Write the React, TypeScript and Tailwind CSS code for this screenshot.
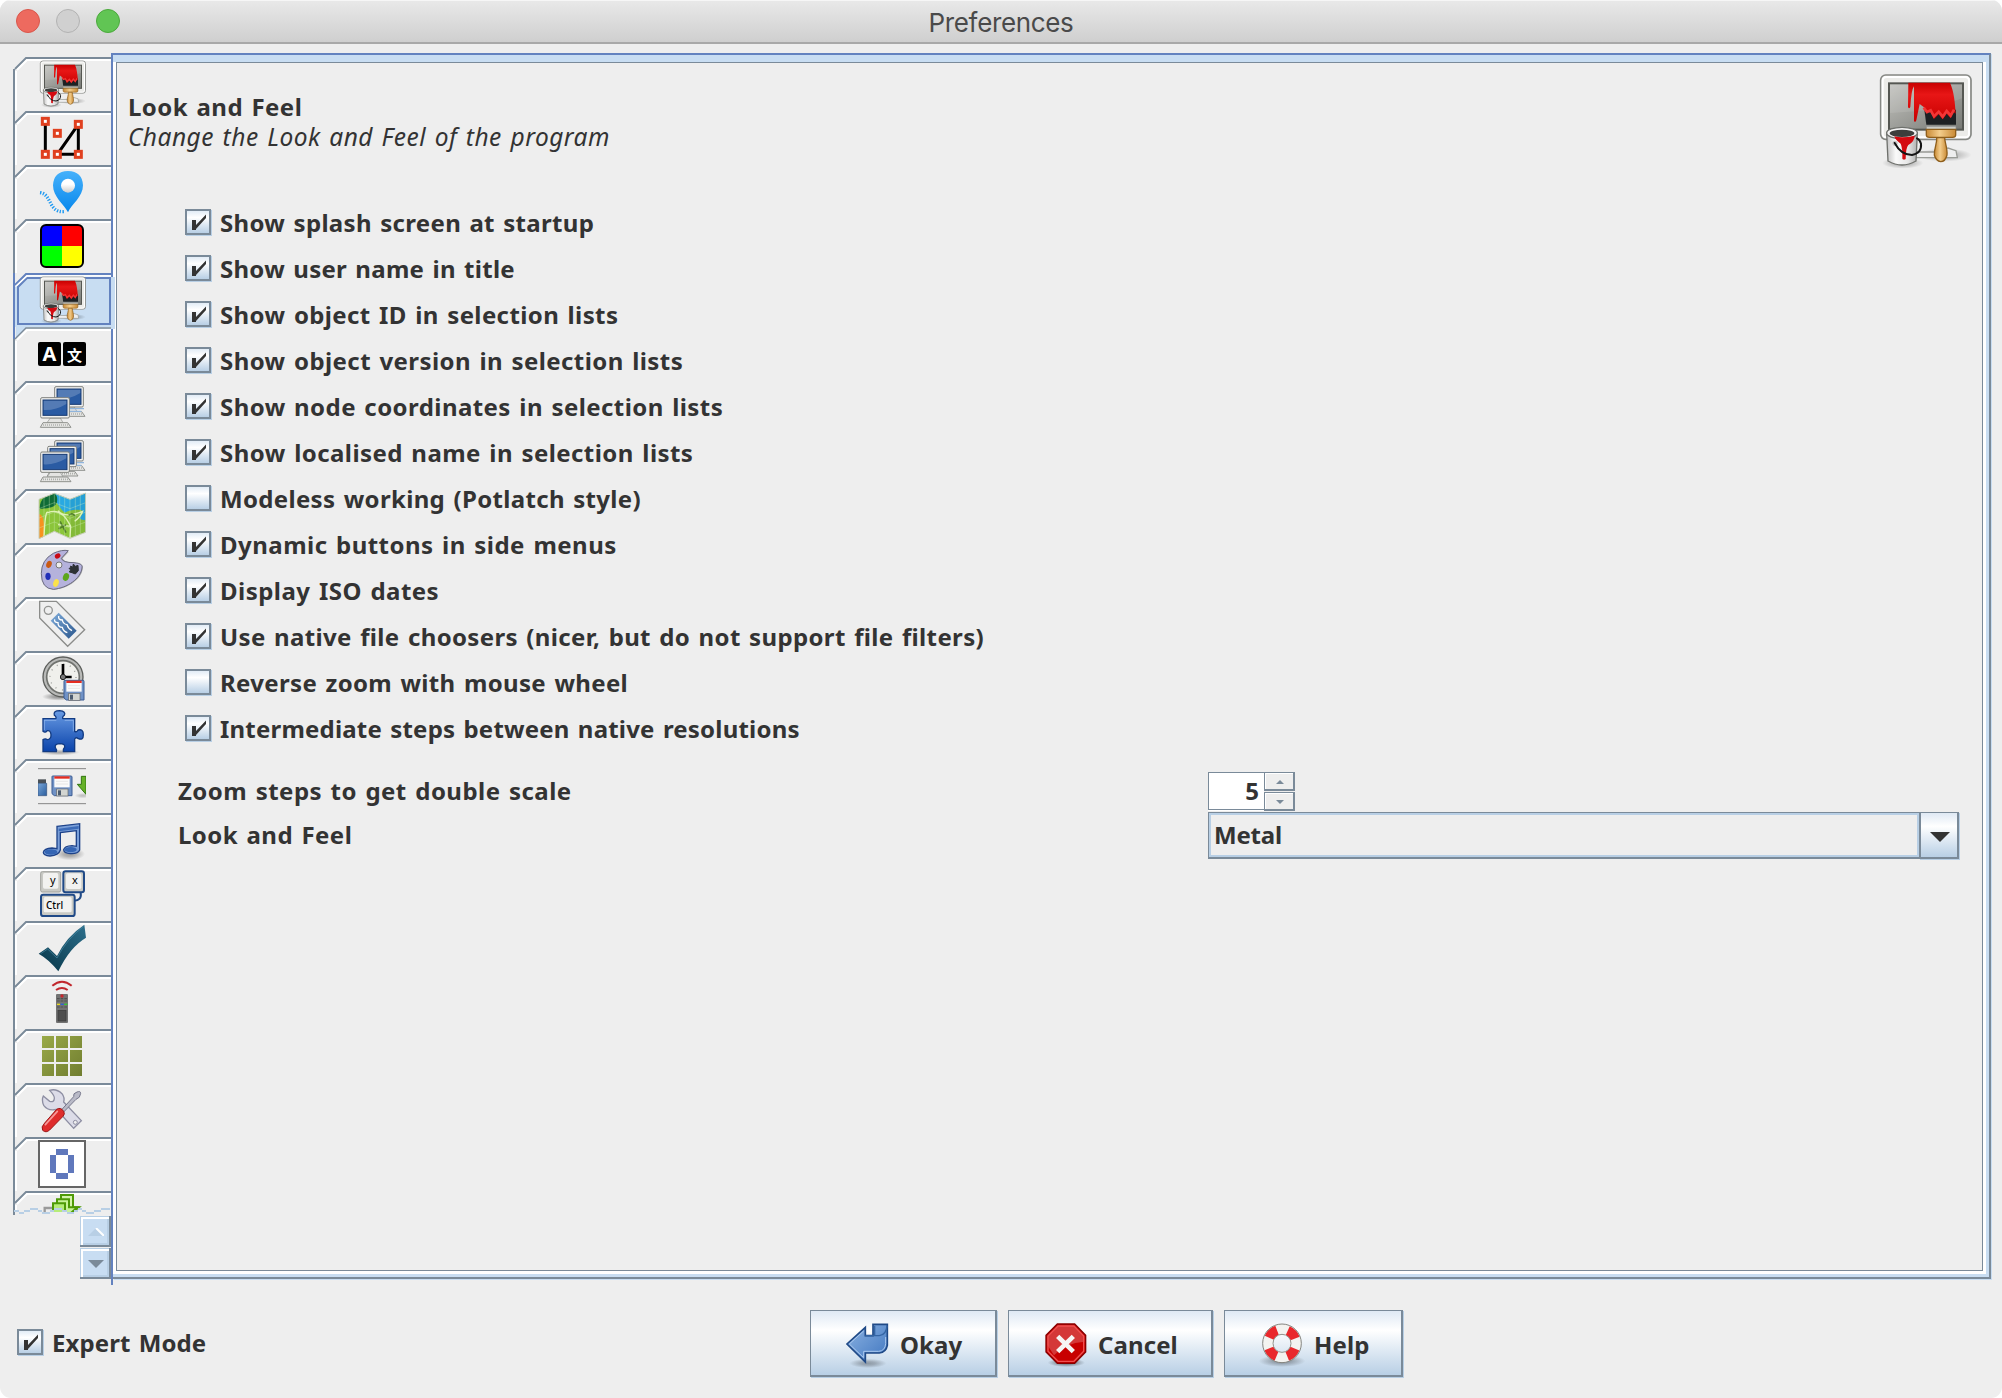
import React from "react";

/* ---------- icons (48px grid, drawn in 144 units) ---------- */

function Ico({ children, box = "0 0 144 144", size = "size-12" }: { children: React.ReactNode; box?: string; size?: string }) {
  return (
    <svg viewBox={box} className={`${size} block shrink-0`} fill="none">
      {children}
    </svg>
  );
}

function Shadow({ id, cx, cy, rx, ry, o = 0.3 }: { id: string; cx: number; cy: number; rx: number; ry: number; o?: number }) {
  return (
    <>
      <radialGradient id={id}>
        <stop offset="0" stopColor="#000" stopOpacity={o} />
        <stop offset=".4" stopColor="#000" stopOpacity={o * 0.75} />
        <stop offset="1" stopColor="#000" stopOpacity="0" />
      </radialGradient>
      <ellipse cx={cx} cy={cy} rx={rx} ry={ry} fill={`url(#${id})`} />
    </>
  );
}

function LookIcon({ id, size }: { id: string; size?: string }) {
  return (
    <Ico box="0 0 288 288" size={size}>
      <defs>
        <linearGradient id={`${id}s`} x1="0" y1="0" x2="1" y2="1">
          <stop offset="0" stopColor="#c4c4c0" />
          <stop offset="1" stopColor="#777974" />
        </linearGradient>
        <linearGradient id={`${id}h`} x1="0" y1="0" x2="1" y2="0">
          <stop offset="0" stopColor="#c98a35" />
          <stop offset=".45" stopColor="#f3cd8c" />
          <stop offset="1" stopColor="#c98a35" />
        </linearGradient>
        <linearGradient id={`${id}b`} x1="0" y1="0" x2="1" y2="0">
          <stop offset="0" stopColor="#c4c4c4" />
          <stop offset=".3" stopColor="#fafafa" />
          <stop offset=".7" stopColor="#e6e6e6" />
          <stop offset="1" stopColor="#b0b0b0" />
        </linearGradient>
        <linearGradient id={`${id}r`} x1="0" y1="0" x2="0" y2="1">
          <stop offset="0" stopColor="#c80000" />
          <stop offset=".3" stopColor="#e81616" />
          <stop offset="1" stopColor="#c80000" />
        </linearGradient>
      </defs>
      <Shadow id={`${id}g`} cx={205} cy={246} rx={82} ry={20} />
      <Shadow id={`${id}k`} cx={80} cy={270} rx={62} ry={17} />
      <path d="M110 237H190L216 225L240 233L244 254H110Z" fill="#eee" stroke="#999b96" strokeWidth="4" />
      <rect x="14" y="6" width="271" height="193" rx="15" fill="#ecece9" stroke="#868884" strokeWidth="5" />
      <rect x="20" y="12" width="259" height="181" rx="11" stroke="#fff" strokeWidth="6" />
      <rect x="39" y="31" width="222" height="139" fill={`url(#${id}s)`} stroke="#555752" strokeWidth="6" />
      <path d="M120 115C170 110 220 90 258 76V34H42V120Z" fill="#fff" opacity=".1" />
      <path d="M145 110H240V155H151Z" fill="#1d2023" />
      <path d="M97 29H222C234 55 237 90 239 122L232 116L224 136L212 122L200 139L188 124L174 138L164 116L152 118L143 102L131 93L121 142Q118 150 114 144L114 40Q106 50 103 102Q99 110 96 102Z" fill={`url(#${id}r)`} />
      <path d="M143 104L153 117L164 112L174 130L188 116L200 131L212 114L224 128L234 110" stroke="#f23636" strokeWidth="8" />
      <path d="M151 160H240V170H151Z" fill="#c9cbc6" stroke="#888" strokeWidth="2" />
      <path d="M151 169H239V186Q239 193 230 193H160Q151 193 151 186Z" fill={`url(#${id}h)`} stroke="#8f5f1c" strokeWidth="4" />
      <path d="M182 194H206C206 208 215 226 213 246Q208 266 194 266Q180 264 175 246C174 226 184 210 182 194Z" fill={`url(#${id}h)`} stroke="#8f5f1c" strokeWidth="4" />
      <path d="M32 180L36 264Q78 288 120 264L124 180Z" fill={`url(#${id}b)`} stroke="#6f716d" strokeWidth="4" />
      <ellipse cx="78" cy="180" rx="46" ry="17" fill="#f4f4f4" stroke="#6f716d" strokeWidth="4" />
      <ellipse cx="78" cy="181" rx="37" ry="11" fill="#3c3e3c" />
      <path d="M55 190Q80 196 116 188Q116 205 97 216Q90 222 89 258Q83 262 79 257Q80 225 74 212Q58 202 55 190Z" fill="#d40a10" />
      <circle cx="57" cy="211" r="8" fill="#c6c6c6" />
      <path d="M56 210Q75 246 108 246Q138 240 135 212Q132 200 123 196" stroke="#151515" strokeWidth="6" strokeLinecap="round" />
    </Ico>
  );
}

function NodesIcon() {
  const pts = [[22, 22], [121, 31], [58, 58], [22, 121], [58, 121], [121, 121]];
  return (
    <Ico>
      <path d="M22 22V121M121 31V121H58L121 31" stroke="#000" strokeWidth="9" />
      {pts.map(([x, y]) => (
        <rect key={`${x}-${y}`} x={x - 9} y={y - 9} width="18" height="18" fill="#fff" stroke="#e0401f" strokeWidth="9" />
      ))}
    </Ico>
  );
}

function PinIcon() {
  return (
    <Ico>
      <defs>
        <linearGradient id="pin" x1="0" y1="0" x2="0" y2="1">
          <stop offset="0" stopColor="#46b1fb" />
          <stop offset="1" stopColor="#0787ec" />
        </linearGradient>
        <linearGradient id="pinc" x1="0" y1="0" x2="0" y2="1">
          <stop offset=".4" stopColor="#fff" />
          <stop offset="1" stopColor="#ccc" />
        </linearGradient>
      </defs>
      <path d="M6 74C42 78 30 134 78 131" stroke="#209af2" strokeWidth="10" strokeDasharray="4 4.5" />
      <path d="M90 133C78 108 45 88 45 52Q47 10 90 9Q133 10 135 52C135 88 100 108 90 133Z" fill="url(#pin)" />
      <circle cx="90" cy="53" r="21" fill="url(#pinc)" />
    </Ico>
  );
}

function ColorsIcon() {
  return (
    <Ico>
      <path d="M24 9H72V72H9V24Q9 9 24 9Z" fill="#00f" />
      <path d="M72 9H120Q135 9 135 24V72H72Z" fill="#f00" />
      <path d="M9 72H72V135H24Q9 135 9 120Z" fill="#0f0" />
      <path d="M72 72H135V120Q135 135 120 135H72Z" fill="#ff0" />
      <rect x="9" y="9" width="126" height="126" rx="15" stroke="#000" strokeWidth="6" />
    </Ico>
  );
}

function LanguageIcon() {
  return (
    <div className="flex h-6 w-12 justify-between tracking-normal">
      <div className="flex h-6 w-[23px] items-center justify-center rounded-[2px] bg-black font-['Noto_Sans'] text-[20px] font-bold leading-none text-white">A</div>
      <div className="flex h-6 w-[23px] items-center justify-center rounded-[2px] bg-black font-['Noto_Sans_CJK_SC',sans-serif] text-[15px] font-bold leading-none text-white">文</div>
    </div>
  );
}

function Monitor({ x, y }: { x: number; y: number }) {
  return (
    <g transform={`translate(${x} ${y})`}>
      <path d="M30 62H60L68 76H20Z" fill="#e4e4e2" stroke="#90928e" strokeWidth="2" />
      <path d="M8 76H82L92 90H0Z" fill="#e6e6e4" stroke="#90928e" strokeWidth="3" />
      <path d="M8 83H84" stroke="#aeb0ac" strokeWidth="5" strokeDasharray="3 3" />
      <rect x="1" y="1" width="86" height="61" rx="4" fill="#f2f2f0" stroke="#80827e" strokeWidth="3" />
      <rect x="8" y="8" width="72" height="46" fill="#2a5ba3" stroke="#173a72" strokeWidth="3" />
      <path d="M10 10H78V20Q45 40 10 38Z" fill="#fff" opacity=".2" />
    </g>
  );
}

function ComputersIcon({ three = false }: { three?: boolean }) {
  return (
    <Ico>
      <Monitor x={49} y={7} />
      <path d="M94 74H138M90 82H130" stroke="#8fb4dc" strokeWidth="4" />
      {three && <Monitor x={28} y={24} />}
      <Monitor x={7} y={three ? 41 : 40} />
    </Ico>
  );
}

function MapIcon() {
  return (
    <Ico>
      <path d="M3 22L49 4L96 22L143 3V121L96 139L49 118L3 140Z" fill="#8bc53a" />
      <path d="M50 4L96 22L143 3V85Q128 84 124 78Q140 60 130 54Q100 50 80 62Q66 50 55 30Z" fill="#29a9e1" />
      <path d="M3 60Q5 25 20 16L48 4Q62 12 56 34Q46 52 3 50Z" fill="#0e6b36" />
      <path d="M3 66Q22 68 18 134L3 140Z" fill="#f7931e" />
      <path d="M96 22L143 3V121L96 139Z" fill="#000" opacity=".05" />
      <path d="M18 134Q22 50 30 62Q70 45 98 103L96 138M60 98L98 103M60 56Q80 80 134 58Q128 75 110 88" stroke="#e0f3b5" strokeWidth="4" />
      <path d="M66 88L84 122M62 110L84 98M92 70Q105 60 112 74" stroke="#507e28" strokeWidth="5" />
      <path d="M3 50L49 32L96 50L143 32M3 78L49 60L96 79L143 60M3 108L49 90L96 108L143 90M18 16V134M34 10V126M65 10V126M80 16V132M112 16V133M127 9V127M49 4V118M96 22V139" stroke="#d4efc0" strokeWidth="2" opacity=".5" />
      <path d="M3 22L49 4L96 22L143 3V121L96 139L49 118L3 140Z" stroke="#c7cdb8" strokeWidth="3" />
    </Ico>
  );
}

function PaletteIcon() {
  return (
    <Ico>
      <path d="M92 18L74 37Q80 52 112 50Q138 52 134 70C130 100 90 128 50 131Q14 128 13 84Q13 44 50 25Q72 14 92 18Z" fill="#333" opacity=".35" />
      <path d="M91 14L70 37Q74 50 108 50Q137 52 132 66C128 98 88 126 46 130Q10 128 10 82Q10 42 46 22Q72 10 91 14Z" fill="#b5b2dc" stroke="#6a6b80" strokeWidth="3" />
      <circle cx="63" cy="57" r="9" fill="#eee" stroke="#777" strokeWidth="3" />
      <ellipse cx="59" cy="30" rx="9" ry="7" fill="#c90a16" transform="rotate(-35 59 30)" />
      <ellipse cx="33" cy="55" rx="8" ry="11" fill="#c95a12" transform="rotate(20 33 55)" />
      <ellipse cx="30" cy="91" rx="8" ry="11" fill="#222fb8" />
      <ellipse cx="54" cy="111" rx="8" ry="12" fill="#fbe24a" transform="rotate(20 54 111)" />
      <ellipse cx="84" cy="93" rx="9" ry="12" fill="#5da61c" transform="rotate(20 84 93)" />
      <path d="M98 60L104 64L106 54L112 61L120 58L121 74L112 84L102 80L94 78L98 72L93 67L98 66Z" fill="#2d3135" stroke="#2d3135" strokeWidth="3" />
    </Ico>
  );
}

function TagIcon() {
  return (
    <Ico>
      <defs>
        <linearGradient id="tag" x1="0" y1="0" x2="1" y2="1">
          <stop offset="0" stopColor="#7facdb" />
          <stop offset="1" stopColor="#2a568c" />
        </linearGradient>
      </defs>
      <path d="M5 4H55L140 89L89 139L5 54Z" fill="#efefef" stroke="#8b8c8a" strokeWidth="4" />
      <circle cx="31" cy="31" r="12" stroke="#949593" strokeWidth="4" />
      <path d="M62 38L116 92L92 116L38 62Z" fill="url(#tag)" />
      <path d="M50 58Q48 68 60 68Q60 82 73 82Q76 94 88 98M62 48Q60 60 73 60Q75 72 87 74Q90 86 102 92" stroke="#fff" strokeWidth="4" />
    </Ico>
  );
}

function Floppy({ x, y }: { x: number; y: number }) {
  return (
    <g transform={`translate(${x} ${y})`}>
      <path d="M2 1H58Q61 1 61 4V60H8L1 54V3Z" fill="#7092c6" stroke="#3c5d94" strokeWidth="3" />
      <rect x="8" y="3" width="46" height="32" fill="#fafafa" />
      <rect x="8" y="2" width="46" height="7" fill="#e52c20" />
      <path d="M13 17H49M13 25H49" stroke="#ddd" strokeWidth="2" />
      <rect x="15" y="40" width="34" height="21" fill="#d3d5d1" stroke="#65676a" strokeWidth="2" />
      <rect x="19" y="44" width="9" height="15" fill="#4c5b6f" />
    </g>
  );
}

function BackupIcon() {
  return (
    <Ico>
      <Shadow id="bks" cx={62} cy={128} rx={50} ry={12} o={0.4} />
      <circle cx="75" cy="69" r="60" fill="#b9bab8" stroke="#5c5e5b" strokeWidth="4" />
      <circle cx="75" cy="69" r="49" fill="#f0f0ec" stroke="#70726e" strokeWidth="5" />
      <circle cx="75" cy="69" r="39" stroke="#9c9e9a" strokeWidth="4" strokeDasharray="3 17.4" />
      <path d="M75 30V69H101" stroke="#000" strokeWidth="8" />
      <circle cx="75" cy="69" r="8" fill="#777" stroke="#222" strokeWidth="3" />
      <Floppy x={77} y={78} />
    </Ico>
  );
}

function PuzzleIcon() {
  return (
    <Ico>
      <defs>
        <linearGradient id="pz" x1="0" y1="0" x2="0" y2="1">
          <stop offset="0" stopColor="#699be3" />
          <stop offset="1" stopColor="#0a43ab" />
        </linearGradient>
      </defs>
      <Shadow id="pzs" cx={64} cy={133} rx={62} ry={9} />
      <path d="M15 32H53Q57 28 49 22Q45 8 65 8Q85 10 79 22Q71 28 75 32H110V70Q116 74 120 66Q136 62 136 80Q136 98 121 92Q114 86 110 93V131H76Q74 124 80 118Q82 107 65 107Q49 108 52 119Q57 125 55 131H15V95Q22 90 28 95Q40 94 39 80Q38 66 28 68Q22 76 15 70Z" fill="url(#pz)" stroke="#123b83" strokeWidth="4" />
      <path d="M19 37H55M19 36V66M80 37H106V70" stroke="#9cc0f2" strokeWidth="2" />
    </Ico>
  );
}

function ToolbarIcon() {
  return (
    <Ico>
      <defs>
        <linearGradient id="tb" x1="0" y1="0" x2="1" y2="1">
          <stop offset="0" stopColor="#79a6d8" />
          <stop offset="1" stopColor="#2b5e9e" />
        </linearGradient>
      </defs>
      <path d="M0 20H144M0 125H144" stroke="#858585" strokeWidth="3" />
      <path d="M0 52H24V64H0Z" fill="#4a5056" />
      <path d="M0 64H26V101H0Z" fill="url(#tb)" stroke="#31507c" strokeWidth="2" />
      <Floppy x={41} y={41} />
      <Shadow id="tbs" cx={134} cy={101} rx={24} ry={8} o={0.2} />
      <path d="M144 43H130V67H118L144 97Z" fill="#66b129" stroke="#2f7410" strokeWidth="3" />
    </Ico>
  );
}

function MusicIcon() {
  return (
    <Ico>
      <Shadow id="mus" cx={95} cy={114} rx={46} ry={19} o={0.35} />
      <path d="M57 31L125 23V102Q120 114 98 113Q77 111 77 101Q80 90 102 89L115 91V44L67 50V102Q62 118 36 120Q16 119 16 109Q18 98 42 96L57 98Z" fill="#7a9fd8" stroke="#1e438a" strokeWidth="4" />
      <path d="M62 38L122 30V38L62 46Z" fill="#3c6bb8" />
      <ellipse cx="39" cy="108" rx="19" ry="8" fill="#3465b4" />
      <ellipse cx="98" cy="101" rx="18" ry="8" fill="#3465b4" />
    </Ico>
  );
}

function KeysIcon() {
  return (
    <div className="relative size-12 font-['Noto_Sans'] font-normal tracking-normal text-black">
      <svg viewBox="0 0 144 144" className="absolute inset-0 size-12" fill="none">
        <path d="M128 68Q132 92 108 92" stroke="#204a87" strokeWidth="6" />
        <rect x="8" y="5" width="60" height="61" rx="5" fill="#c9cac5" stroke="#a0a29d" strokeWidth="3" />
        <rect x="15" y="9" width="46" height="47" rx="5" fill="#f2f2f0" />
        <rect x="76" y="4" width="62" height="63" rx="7" fill="#c9cac5" stroke="#204a87" strokeWidth="6" />
        <rect x="84" y="10" width="46" height="47" rx="5" fill="#f2f2f0" />
        <rect x="9" y="74" width="101" height="64" rx="7" fill="#c9cac5" stroke="#204a87" strokeWidth="6" />
        <rect x="17" y="81" width="84" height="46" rx="5" fill="#f2f2f0" />
      </svg>
      <span className="absolute left-[12px] top-[3px] text-[11px] leading-[14px]">y</span>
      <span className="absolute left-[34px] top-[3px] text-[11px] leading-[14px]">x</span>
      <span className="absolute left-[8px] top-[28px] text-[10px] font-medium leading-[14px]">Ctrl</span>
    </div>
  );
}

function CheckIcon() {
  return (
    <Ico>
      <defs>
        <linearGradient id="ck" x1="1" y1="0" x2="0" y2="1">
          <stop offset="0" stopColor="#2c6f8c" />
          <stop offset="1" stopColor="#073648" />
        </linearGradient>
      </defs>
      <path d="M2 89L30 70L57 96Q85 38 139 2L144 41Q95 70 61 142Q35 108 2 89Z" fill="url(#ck)" />
      <path d="M8 89L29 75L57 102Q86 45 136 8" stroke="#4a8ba6" strokeWidth="2" />
    </Ico>
  );
}

function RemoteIcon() {
  return (
    <Ico>
      <path d="M43 23Q72 -1 101 23M54 36Q72 24 89 36" stroke="#c1272d" strokeWidth="6" />
      <rect x="54" y="48" width="36" height="87" rx="3" fill="#737373" />
      <circle cx="72" cy="54" r="5" fill="#c8262d" />
      <path d="M57 62H87M57 69H87M57 87H87" stroke="#505050" strokeWidth="3.5" strokeDasharray="8 3" />
      <path d="M57 79H66" stroke="#e5d720" strokeWidth="4" />
      <path d="M68 79H77" stroke="#2b62d9" strokeWidth="4" />
      <path d="M79 79H88" stroke="#30cc30" strokeWidth="4" />
      <rect x="60" y="97" width="24" height="32" fill="#4e4e4e" stroke="#3a3a3a" strokeWidth="2" />
    </Ico>
  );
}

function GridIcon() {
  const c = [12, 54, 96];
  return (
    <Ico>
      <defs>
        <linearGradient id="gr" gradientUnits="userSpaceOnUse" x1="12" y1="12" x2="132" y2="132">
          <stop offset="0" stopColor="#9aaa48" />
          <stop offset="1" stopColor="#707d30" />
        </linearGradient>
      </defs>
      {c.map((y) => c.map((x) => <rect key={`${x}-${y}`} x={x} y={y} width="36" height="36" fill="url(#gr)" />))}
    </Ico>
  );
}

function ToolsIcon() {
  return (
    <Ico>
      <path d="M35 13Q55 7 72 23Q81 35 77 48L130 104L107 127L55 70Q30 76 17 58Q10 42 16 30L35 46Q48 50 49 38Q51 30 35 13Z" fill="#dcdce8" stroke="#8d8ea2" strokeWidth="4" />
      <circle cx="112" cy="109" r="6" fill="#eee" stroke="#8d8ea2" strokeWidth="3" />
      <path d="M70 72L107 32Q104 22 117 18Q128 14 128 22Q127 36 114 40L77 78Z" fill="#b9bac7" stroke="#77788c" strokeWidth="3" />
      <path d="M56 70Q68 62 77 76Q82 84 75 91L35 132Q24 142 14 133Q8 123 20 111Z" fill="#df2c2c" stroke="#9c1616" strokeWidth="3" />
      <path d="M58 76L22 116" stroke="#f79898" strokeWidth="5" strokeLinecap="round" />
    </Ico>
  );
}

function ZeroIcon() {
  return (
    <Ico>
      <rect x="3" y="3" width="138" height="138" fill="#fff" stroke="#666" strokeWidth="6" />
      <path d="M54 27H90V45H54ZM36 45H54V99H36ZM90 45H108V99H90ZM54 99H90V117H54Z" fill="#6078bc" />
    </Ico>
  );
}

function StackIcon() {
  return (
    <Ico>
      <path d="M20 60V42H45" stroke="#9a9a9a" strokeWidth="7" />
      <path d="M69 3H105V40H123L100 58H69Z" fill="#d3f3a9" stroke="#4e9a06" strokeWidth="6" />
      <path d="M57 16H93V40H118L98 58H57Z" fill="#c9f397" stroke="#4e9a06" strokeWidth="6" />
      <path d="M45 28H81V60H45Z" fill="#b6ec78" stroke="#4e9a06" strokeWidth="6" />
    </Ico>
  );
}

/* ---------- tabs ---------- */

const SELECTED = 4;

const tabs: React.ReactNode[] = [
  <LookIcon id="t0" />, <NodesIcon />, <PinIcon />, <ColorsIcon />, <LookIcon id="t4" />, <LanguageIcon />,
  <ComputersIcon />, <ComputersIcon three />, <MapIcon />, <PaletteIcon />, <TagIcon />, <BackupIcon />,
  <PuzzleIcon />, <ToolbarIcon />, <MusicIcon />, <KeysIcon />, <CheckIcon />, <RemoteIcon />,
  <GridIcon />, <ToolsIcon />, <ZeroIcon />, <StackIcon />,
];

function TabEdge({ index }: { index: number }) {
  const selected = index === SELECTED;
  const afterSelected = index === SELECTED + 1;
  return (
    <svg viewBox="0 0 98 54" className="absolute left-0 top-0 h-[54px] w-[98px]" fill="none">
      {selected && <path d="M3 14L14 3H98V54H3Z" fill="#c8ddf2" />}
      {afterSelected && <path d="M3 0H14L3 11Z" fill="#c8ddf2" />}
      <path d={index === 0 ? "M1 12V54" : "M1 0V54"} stroke={selected ? "#6382bf" : "#7a8a99"} strokeWidth="2" />
      {afterSelected && <path d="M1 0V12" stroke="#6382bf" strokeWidth="2" />}
      <path d="M3 14V54" stroke={selected ? "#c8ddf2" : "#fff"} strokeWidth="2" />
      <path d="M2 12L13 1H98" stroke={selected ? "#6382bf" : "#7a8a99"} strokeWidth={afterSelected ? 1.4 : 2} />
      {selected ? (
        <>
          <path d="M5 51V14L14 5H97V51Z" stroke="#6382bf" strokeWidth="2" />
          <path d="M3 13L14 3H98" stroke="#fff" strokeWidth="1.4" />
        </>
      ) : (
        <path d="M4 13L14 3H98" stroke="#fff" strokeWidth="2" />
      )}
    </svg>
  );
}

function TabStrip() {
  return (
    <div className="flex w-[98px] shrink-0 flex-col pt-[13px]">
      <div className="relative h-[1158px] overflow-hidden">
        {tabs.map((icon, i) => (
          <div key={i} className="relative flex h-[54px] items-center pl-[25px]">
            <TabEdge index={i} />
            <div className="relative">{icon}</div>
          </div>
        ))}
        <svg viewBox="0 0 98 8" className="absolute bottom-0 left-0 h-2 w-[98px]" fill="none">
          <path d="M2 5H98V8H2Z" fill="#eee" />
          <path d="M1 4H6M6 6H11M11 4H17M17 2H25M25 4H29M29 6H37M37 4H41M41 2H49M49 4H54M54 6H61M61 4H65M65 2H69M69 4H73M73 6H81M81 4H88M88 2H97" stroke="#b8cfe5" strokeWidth="2" />
        </svg>
      </div>
      <div className="mt-px flex flex-col items-end gap-px">
        <div className="flex h-[31px] w-[31px] items-center justify-center border-b-2 border-r-2 border-[#7a8a99] bg-[#c8ddf2] pl-[3px] pt-[3px] shadow-[inset_1px_1px_0_#b8cfe5,inset_3px_3px_0_#fff,inset_-2px_-2px_0_#b8cfe5]">
          <svg viewBox="0 0 16 8" className="h-2 w-4"><path d="M0 8L8 0L16 8Z" fill="#b8cfe5" /><path d="M8 0L16 8" stroke="#fff" strokeWidth="2" /></svg>
        </div>
        <div className="flex h-[31px] w-[31px] items-center justify-center border-b-2 border-r-2 border-[#7a8a99] bg-[#c8ddf2] pl-[3px] pt-[3px] shadow-[inset_1px_1px_0_#b8cfe5,inset_3px_3px_0_#fff,inset_-2px_-2px_0_#b8cfe5]">
          <svg viewBox="0 0 16 8" className="h-2 w-4"><path d="M0 0L8 8L16 0Z" fill="#7a8a99" /></svg>
        </div>
      </div>
    </div>
  );
}

/* ---------- controls ---------- */

function Checkbox({ label, checked, spacing = "" }: { label: string; checked: boolean; spacing?: string }) {
  return (
    <div className="flex h-[46px] items-center gap-[9px]">
      <div className="size-[26px] shrink-0 border-2 border-[#7a8a99] bg-linear-to-b from-[#e2ecf6] via-white via-30% to-[#b8cfe5] shadow-[1px_1px_0_#b8cfe5]">
        {checked && (
          <svg viewBox="0 0 22 22" className="size-[22px]" fill="none">
            <path d="M5 9H9V14L19 3.5V7L9 18V19H5Z" fill="#333" />
          </svg>
        )}
      </div>
      <span className={`whitespace-nowrap pt-[2px] ${spacing}`}>{label}</span>
    </div>
  );
}

const options: [string, boolean, string][] = [
  ["Show splash screen at startup", true, "tracking-[0.32px]"],
  ["Show user name in title", true, "tracking-[0.27px]"],
  ["Show object ID in selection lists", true, "tracking-[0.39px]"],
  ["Show object version in selection lists", true, "tracking-[0.42px]"],
  ["Show node coordinates in selection lists", true, "tracking-[0.43px]"],
  ["Show localised name in selection lists", true, "tracking-[0.44px]"],
  ["Modeless working (Potlatch style)", false, "tracking-[0.33px]"],
  ["Dynamic buttons in side menus", true, "tracking-[0.47px]"],
  ["Display ISO dates", true, "tracking-[0.47px]"],
  ["Use native file choosers (nicer, but do not support file filters)", true, "tracking-[0.36px]"],
  ["Reverse zoom with mouse wheel", false, "tracking-[0.34px]"],
  ["Intermediate steps between native resolutions", true, "tracking-[0.2px]"],
];

function OkayIcon() {
  return (
    <Ico>
      <defs>
        <linearGradient id="ok" x1="0" y1="0" x2="1" y2="1">
          <stop offset="0" stopColor="#8db3e2" />
          <stop offset="1" stopColor="#3f76c0" />
        </linearGradient>
      </defs>
      <Shadow id="oks" cx={72} cy={127} rx={56} ry={14} />
      <path d="M87 10H130V73Q126 94 106 96H64V123L9 69L64 19V44H87Z" fill="url(#ok)" stroke="#204a87" strokeWidth="5" />
      <path d="M64 44H106Q127 42 129 14M92 14V44" stroke="#3465a4" strokeWidth="4" />
      <path d="M59 30L16 69L59 110V91H104Q123 90 125 68V48" stroke="#a9c8ef" strokeWidth="3" />
    </Ico>
  );
}

function CancelIcon() {
  return (
    <Ico>
      <Shadow id="cas" cx={73} cy={125} rx={56} ry={13} o={0.5} />
      <path d="M46 9H98L131 43V93L98 127H46L12 93V43Z" fill="#c80000" stroke="#860000" strokeWidth="4" />
      <path d="M16 72V45L48 14H96L127 45V62Q70 65 36 103Z" fill="#fff" opacity=".22" />
      <path d="M48 15H96L125 45V91L96 121H48L18 91V45Z" stroke="#ef5050" strokeWidth="4" />
      <path d="M47 46L94 92M94 46L47 92" stroke="#f6f6f5" strokeWidth="14" />
    </Ico>
  );
}

function HelpIcon() {
  return (
    <Ico>
      <Shadow id="hes" cx={72} cy={120} rx={70} ry={18} o={0.35} />
      <circle cx="72" cy="67" r="42" stroke="#f3f3f0" strokeWidth="31" />
      <circle cx="72" cy="67" r="42" stroke="#e9282c" strokeWidth="29" strokeDasharray="33 32.97" strokeDashoffset="-16.5" />
      <circle cx="72" cy="67" r="58" stroke="#85857f" strokeWidth="3" />
      <circle cx="72" cy="67" r="27" stroke="#92928b" strokeWidth="3" />
    </Ico>
  );
}

function Button({ label, width, icon }: { label: string; width: string; icon: React.ReactNode }) {
  return (
    <button className={`${width} flex h-[67px] items-center justify-start border-2 border-l border-t border-[#7a8a99] bg-linear-to-b from-[#dfe9f4] via-white via-30% to-[#b8cfe5] pl-[33px] pt-[4px] shadow-[1px_1px_0_#b8cfe5]`}>
      {icon}
      <span className="ml-[8px]">{label}</span>
    </button>
  );
}

export default function App() {
  return (
    <div className="h-[1398px] w-[2002px] overflow-hidden bg-white">
      <div className="flex h-full flex-col overflow-hidden rounded-[11px] bg-[#eee] font-['Noto_Sans',sans-serif] text-[24px] font-bold leading-[30px] tracking-[0.1px] text-[#333] [word-spacing:1.8px]">
        <header className="relative flex h-[44px] shrink-0 items-center border-b-2 border-[#a8a8a8] bg-linear-to-b from-[#e9e9e9] to-[#cfcfcf] pl-4 shadow-[inset_0_1px_0_#f6f6f6]">
          <div className="flex gap-4">
            <span className="size-6 rounded-full border border-[#d9564b] bg-[#ed6a5f]" />
            <span className="size-6 rounded-full border border-[#b2b2b2] bg-[#d0d0d0]" />
            <span className="size-6 rounded-full border border-[#4ba93c] bg-[#61c554]" />
          </div>
          <h1 className="absolute inset-x-0 top-[8px] text-center font-['Inter',sans-serif] text-[26px] font-normal tracking-[-0.35px] text-[#4a4a4a]">Preferences</h1>
        </header>

        <div className="flex h-[1241px] shrink-0 pl-[13px]">
          <TabStrip />
          <div className="relative z-10 w-[2px] shrink-0">
            <div className="absolute bottom-0 left-0 top-[9px] w-[2px] bg-[#6382bf]" />
            <div className="absolute left-0 top-[233px] h-[52px] w-[4px] bg-[#c8ddf2]" />
          </div>
          <main className="mt-[9px] flex h-[1226px] w-[1878px] shrink-0 flex-col border-b-2 border-r-2 border-t-2 border-b-[#7a8a99] border-r-[#7a8a99] border-t-[#6382bf] bg-[#c8ddf2] shadow-[1px_1px_0_#c8ddf2]">
            <div className="mb-[3px] mr-[3px] mt-[7px] flex-1 border-b-[3px] border-l-[3px] border-r-[3px] border-white">
              <div className="h-full border border-[#7a8a99] bg-[#eee]">
                <div className="flex justify-between pl-[11px] pr-[10px] pt-[10px]">
                  <div className="pt-[19px]">
                    <h2 className="tracking-[0.44px]">Look and Feel</h2>
                    <p className="text-[24.5px] font-normal italic tracking-[0.48px]">Change the Look and Feel of the program</p>
                  </div>
                  <LookIcon id="hd" size="size-24" />
                </div>
                <div className="pl-[68px] pt-[30px]">
                  {options.map(([label, checked, spacing]) => (
                    <Checkbox key={label} label={label} checked={checked} spacing={spacing} />
                  ))}
                </div>
                <div className="grid grid-cols-[1030px_752px] pl-[61px] pt-[21px]">
                  <span className="pt-[4px] tracking-[0.47px]">Zoom steps to get double scale</span>
                  <div className="flex h-[40px]">
                    <div className="h-[38px] w-[56px] border border-r-0 border-[#7a8a99] bg-white pr-[5px] text-right leading-[36px] shadow-[0_1px_0_#fff]">5</div>
                    <div className="flex h-[39px] w-[31px] flex-col gap-px">
                      <div className="flex h-[19px] items-center justify-center border-2 border-l border-t border-[#7a8a99] pl-px pt-[2px] shadow-[inset_1px_1px_0_#fff]">
                        <svg viewBox="0 0 8 4" className="h-1 w-2"><path d="M0 4L4 0L8 4Z" fill="#7a8a99" /></svg>
                      </div>
                      <div className="flex h-[19px] items-center justify-center border-2 border-l border-t border-[#7a8a99] pl-px pt-[2px] shadow-[inset_1px_1px_0_#fff]">
                        <svg viewBox="0 0 8 4" className="h-1 w-2"><path d="M0 0L4 4L8 0Z" fill="#7a8a99" /></svg>
                      </div>
                    </div>
                  </div>
                  <span className="pt-[8px] tracking-[0.44px]">Look and Feel</span>
                  <div className="flex h-[47px] w-[751px]">
                    <div className="flex flex-1 items-center border border-b-2 border-r-0 border-[#7a8a99] pl-[5px] tracking-[-0.2px] shadow-[inset_2px_2px_0_#b8cfe5,inset_-2px_-2px_0_#b8cfe5]">Metal</div>
                    <div className="flex w-[40px] items-center justify-center border-2 border-t border-[#7a8a99] bg-linear-to-b from-[#dfe9f4] via-white via-30% to-[#b8cfe5] pl-[2px] pt-[4px] shadow-[1px_1px_0_#b8cfe5]">
                      <svg viewBox="0 0 20 10" className="h-[10px] w-5"><path d="M0 0L10 10L20 0Z" fill="#333" /></svg>
                    </div>
                  </div>
                </div>
              </div>
            </div>
          </main>
        </div>

        <footer className="flex items-start">
          <div className="w-[810px] pl-[17px] pt-[34px]">
            <Checkbox label="Expert Mode" checked />
          </div>
          <div className="flex gap-[11px] pt-[25px]">
            <Button label="Okay" width="w-[187px]" icon={<OkayIcon />} />
            <Button label="Cancel" width="w-[205px]" icon={<CancelIcon />} />
            <Button label="Help" width="w-[179px]" icon={<HelpIcon />} />
          </div>
        </footer>
      </div>
    </div>
  );
}
